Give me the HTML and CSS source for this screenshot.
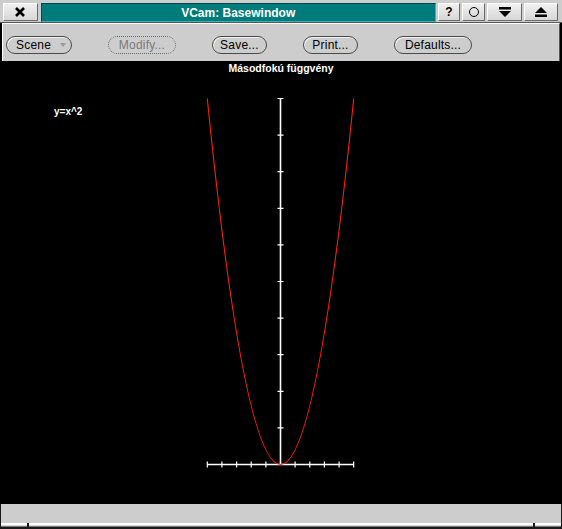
FILE: index.html
```html
<!DOCTYPE html>
<html lang="en">
<head>
  <meta charset="UTF-8">
  <title>VCam: Basewindow</title>
  <link rel="stylesheet" href="styles.css">
</head>
<body>
  <div class="window">
    <header class="titlebar">
      <div class="wbtn close">
        <svg width="12" height="12" viewBox="0 0 12 12"><path d="M2 2 L10 10 M10 2 L2 10" stroke="#000" stroke-width="2.6"/></svg>
      </div>
      <div class="title">VCam: Basewindow</div>
      <div class="wbtn help">?</div>
      <div class="wbtn small">
        <svg width="12" height="12" viewBox="0 0 12 12"><circle cx="6" cy="6" r="4.5" fill="none" stroke="#000" stroke-width="1"/></svg>
      </div>
      <div class="wbtn wide">
        <svg width="12" height="10" viewBox="0 0 12 10"><rect x="0" y="0" width="12" height="2.5" fill="#000"/><path d="M0 4 H12 L6 10 Z" fill="#000"/></svg>
      </div>
      <div class="wbtn wide">
        <svg width="12" height="10" viewBox="0 0 12 10"><path d="M6 0 L12 6 H0 Z" fill="#000"/><rect x="0" y="7.5" width="12" height="2.5" fill="#000"/></svg>
      </div>
    </header>

    <nav class="toolbar">
      <button class="pill scene">Scene <span class="arrow"></span></button>
      <button class="pill modify" disabled>Modify...</button>
      <button class="pill save">Save...</button>
      <button class="pill print">Print...</button>
      <button class="pill defaults">Defaults...</button>
    </nav>

    <main class="canvas">
      <svg width="562" height="443" viewBox="0 0 562 443">
        <text class="plot-title" x="281" y="11" text-anchor="middle">Másodfokú függvény</text>
        <text class="plot-label" x="54" y="54">y=x^2</text>

        <g stroke="#fff" fill="none">
          <line x1="280.5" y1="37" x2="280.5" y2="403" stroke-width="1.6"/>
          <line x1="207" y1="403.5" x2="354" y2="403.5" stroke-width="1.4"/>
          <path stroke-width="1.2" d="M277.5 37.5h6 M277.5 74.1h6 M277.5 110.7h6 M277.5 147.3h6 M277.5 183.9h6 M277.5 220.5h6 M277.5 257.1h6 M277.5 293.7h6 M277.5 330.3h6 M277.5 366.9h6"/>
          <path stroke-width="1.2" d="M207.3 400.5v6 M221.9 400.5v6 M236.6 400.5v6 M251.2 400.5v6 M265.9 400.5v6 M295.1 400.5v6 M309.8 400.5v6 M324.4 400.5v6 M339.1 400.5v6 M353.7 400.5v6"/>
        </g>

        <path d="M207.3 37.5 Q280.5 769.5 353.7 37.5" stroke="#ff2200" stroke-width="1.1" fill="none"/>
      </svg>
    </main>

    <footer class="statusbar">
      <div class="gray"></div>
      <div class="strip">
        <span class="seg edge"></span>
        <span class="seg mid"></span>
        <span class="seg edge"></span>
      </div>
    </footer>
  </div>
</body>
</html>
```

FILE: styles.css
```css
/* Colours */
:root {
  --gray: #cdcdcd;
  --gray-dark: #555;
  --light: #fff;
  --teal: #007b7b;
  --teal-dot: #2aa2a2;
}

* { box-sizing: border-box; }
body {
  margin: 0;
  width: 562px;
  height: 529px;
  overflow: hidden;
  background: #000;
  font-family: 'Liberation Sans', Arial, sans-serif;
}

.window {
  display: flex;
  flex-direction: column;
  width: 562px;
  height: 529px;
}

/* Title bar */
.titlebar {
  height: 23px;
  flex: none;
  display: flex;
  gap: 2px;
  padding: 3px 4px 0 3px;
  background: var(--gray);
  border-bottom: 1px solid var(--gray-dark);
}
.wbtn {
  height: 18px;
  display: flex;
  align-items: center;
  justify-content: center;
  background: linear-gradient(#f0f0f0, #d6d6d6);
  border-top: 1px solid var(--light);
  border-left: 1px solid var(--light);
  border-right: 1px solid #6a6a6a;
  border-bottom: 1px solid #6a6a6a;
  font-weight: bold;
  font-size: 12px;
  color: #000;
}
.close { width: 35px; margin-right: 1px; }
.help { width: 23px; }
.small { width: 23px; }
.wide { width: 35px; }
.wide:last-child { width: 34px; }
.title {
  width: 397px;
  height: 19px;
  display: flex;
  align-items: center;
  justify-content: center;
  color: #fff;
  font-weight: bold;
  font-size: 12px;
  background-color: var(--teal);
  background-image: radial-gradient(circle, var(--teal-dot) 0.5px, transparent 0.7px);
  background-size: 2px 2px;
  border-top: 1px solid #004c4c;
  border-left: 1px solid #004c4c;
  border-bottom: 1px solid #3fb3b3;
  border-right: 1px solid #3fb3b3;
}

/* Toolbar */
.toolbar {
  height: 38px;
  flex: none;
  display: flex;
  align-items: flex-start;
  gap: 36px;
  margin: 0 2px;
  padding: 12px 0 0 3px;
  background: var(--gray);
  border-top: 1px solid var(--light);
  border-left: 1px solid var(--light);
  border-right: 1px solid var(--gray-dark);
}
.pill {
  height: 18px;
  padding: 0;
  display: flex;
  align-items: center;
  justify-content: center;
  gap: 5px;
  font-family: inherit;
  font-size: 12px;
  letter-spacing: 0.2px;
  color: #000;
  background: var(--gray);
  border: 1px solid #4a4a4a;
  border-radius: 9px;
  box-shadow: inset 1px 1px 0 #f4f4f4;
}
.scene { width: 66px; justify-content: flex-start; padding-left: 9px; }
.modify {
  width: 68px;
  color: #7a7a7a;
  border: 1px dotted #666;
  box-shadow: none;
}
.save { width: 55px; }
.print { width: 55px; }
.defaults { width: 78px; }
.arrow {
  width: 0;
  height: 0;
  margin-left: 4px;
  border-left: 3px solid transparent;
  border-right: 3px solid transparent;
  border-top: 4px solid #9a9a9a;
}

/* Plot canvas */
.canvas {
  height: 443px;
  flex: none;
  background: #000;
}
.canvas svg { display: block; }
.plot-title, .plot-label {
  fill: #fff;
  font-family: 'Liberation Sans', Arial, sans-serif;
  font-weight: bold;
}
.plot-title { font-size: 10.5px; }
.plot-label { font-size: 10px; }

/* Status bar */
.statusbar {
  height: 25px;
  flex: none;
  display: flex;
  flex-direction: column;
  background: #1a1a1a;
}
.statusbar .gray {
  height: 19px;
  margin: 0 1px;
  background: var(--gray);
}
.strip {
  height: 4px;
  display: flex;
  gap: 2px;
  margin: 0 1px;
}
.seg {
  background: #d8d8d8;
  border-top: 2px solid var(--light);
  border-bottom: 1px solid #777;
}
.seg.edge { width: 26px; }
.seg.mid { flex: 1; }
```
